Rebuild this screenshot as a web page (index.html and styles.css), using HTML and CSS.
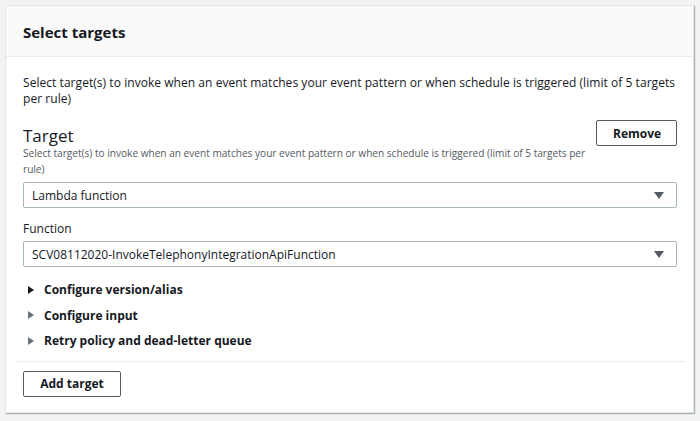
FILE: index.html
```html
<!DOCTYPE html>
<html>
<head>
<meta charset="utf-8">
<link rel="stylesheet" href="styles.css">
</head>
<body>
<div class="card">
  <div class="card-header">Select targets</div>
  <div class="card-body">
    <p class="intro">Select target(s) to invoke when an event matches your event pattern or when schedule is triggered (limit of 5 targets per rule)</p>
    <div class="target">
      <div class="target-head">
        <div class="target-text">
          <div class="target-title">Target</div>
          <div class="target-desc">Select target(s) to invoke when an event matches your event pattern or when schedule is triggered (limit of 5 targets per rule)</div>
        </div>
        <button class="btn btn-remove">Remove</button>
      </div>
      <div class="select"><span>Lambda function</span><span class="caret"></span></div>
      <div class="label">Function</div>
      <div class="select"><span>SCV08112020-InvokeTelephonyIntegrationApiFunction</span><span class="caret"></span></div>
      <ul class="expanders">
        <li class="exp exp-dark"><span class="tri"></span>Configure version/alias</li>
        <li class="exp"><span class="tri"></span>Configure input</li>
        <li class="exp"><span class="tri"></span>Retry policy and dead-letter queue</li>
      </ul>
    </div>
    <div class="footer">
      <button class="btn btn-add">Add target</button>
    </div>
  </div>
</div>
</body>
</html>
```

FILE: styles.css
```css
html, body {
  margin: 0;
  padding: 0;
  background: #f2f3f3;
}
body {
  padding: 5px 6px 7px 5px;
  font-family: "Open Sans", "Noto Sans", sans-serif;
  color: #16191f;
}
.card {
  background: #fff;
  border: 1px solid #e5e7e7;
  box-shadow: 1px 1px 1px 0 rgba(0, 28, 36, 0.3);
  height: 408px;
  box-sizing: border-box;
}
.card-header {
  background: #fafafa;
  border-bottom: 1px solid #eaeded;
  height: 51px;
  box-sizing: border-box;
  padding: 16px 0 0 17px;
  font-size: 15px;
  font-weight: 700;
  line-height: 20px;
}
.card-body {
  padding: 0 16px 0 17px;
}
.intro {
  margin: 18px 0 0;
  font-size: 12px;
  line-height: 16px;
  letter-spacing: 0.05px;
}
.target {
  margin-top: 15px;
}
.target-head {
  display: flex;
  justify-content: space-between;
  align-items: flex-start;
}
.target-text {
  flex: 1;
  padding-right: 0;
}
.target-title {
  font-size: 17px;
  line-height: 20px;
  margin-top: 4px;
}
.target-desc {
  font-size: 10.1px;
  line-height: 16px;
  color: #545b64;
  margin-top: -1px;
}
.btn {
  font-family: inherit;
  font-size: 12px;
  font-weight: 700;
  color: #545b64;
  background: #fff;
  border: 1px solid #545b64;
  border-radius: 2px;
  height: 26px;
  box-sizing: border-box;
  padding: 0 16px;
}
.btn-remove {
  width: 81px;
  margin-top: -2px;
  color: #16191f;
}
.btn-add {
  width: 98px;
  color: #16191f;
}
.select {
  margin-top: 5px;
  height: 26px;
  box-sizing: border-box;
  border: 1px solid #aab7b8;
  border-radius: 2px;
  display: flex;
  align-items: center;
  justify-content: space-between;
  padding: 0 12px 0 8px;
  font-size: 12px;
}
.caret {
  width: 0;
  height: 0;
  border-left: 5px solid transparent;
  border-right: 5px solid transparent;
  border-top: 7px solid #545b64;
}
.label {
  margin-top: 13px;
  font-size: 12px;
  line-height: 16px;
  color: #16191f;
}
.label + .select {
  margin-top: 4px;
}
.expanders {
  list-style: none;
  margin: 10px 0 0;
  padding: 0 0 0 5px;
}
.exp {
  display: flex;
  align-items: center;
  height: 25.5px;
  font-size: 12px;
  font-weight: 700;
  color: #16191f;
}
.tri {
  width: 0;
  height: 0;
  border-top: 4.5px solid transparent;
  border-bottom: 4.5px solid transparent;
  border-left: 6px solid #687078;
  margin-right: 10px;
}
.exp-dark .tri {
  border-left-color: #16191f;
}
.footer {
  margin: 7px -9px 0 -8px;
  border-top: 1px solid #eaeded;
  padding: 9px 0 0 8px;
}
```
